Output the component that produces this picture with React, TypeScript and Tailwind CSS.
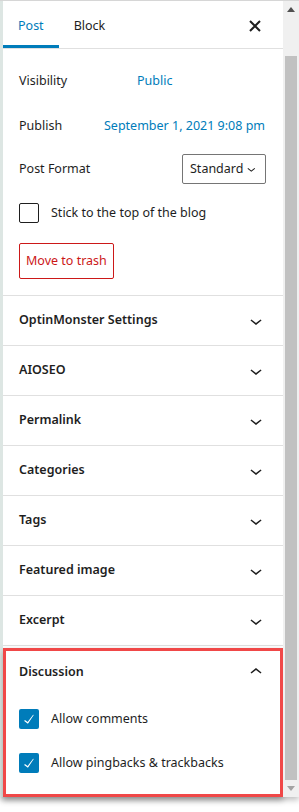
import React from "react";

const font = { fontFamily: '"Segoe UI", "Noto Sans", sans-serif' };

function ChevronDown({ size = 24 }: { size?: number }) {
  return (
    <svg width={size} height={size} viewBox="0 0 24 24" fill="#1e1e1e">
      <path d="M17.5 11.6L12 16l-5.5-4.4.9-1.2L12 14l4.6-3.6 1 1.2z" />
    </svg>
  );
}

function ChevronUp() {
  return (
    <svg width={24} height={24} viewBox="0 0 24 24" fill="#1e1e1e">
      <path d="M6.5 12.4L12 8l5.5 4.4-.9 1.2L12 10l-4.5 3.6-1-1.2z" />
    </svg>
  );
}

function CloseIcon() {
  return (
    <svg width={12} height={12} viewBox="0 0 12 12" stroke="#1e1e1e" strokeWidth={2}>
      <path d="M1 1L11 11M11 1L1 11" />
    </svg>
  );
}

function Checkbox({ checked }: { checked?: boolean }) {
  return checked ? (
    <span className="w-5 h-5 rounded-[2px] bg-[#007cba] flex items-center justify-center shrink-0">
      <svg width={24} height={24} viewBox="0 0 24 24" fill="#ffffff">
        <path d="M16.7 7.1l-6.3 8.5-3.3-2.5-.9 1.2 4.5 3.4L17.9 7z" />
      </svg>
    </span>
  ) : (
    <span className="w-5 h-5 rounded-[2px] border border-[#1e1e1e] bg-white shrink-0" />
  );
}

const panels = [
  "OptinMonster Settings",
  "AIOSEO",
  "Permalink",
  "Categories",
  "Tags",
  "Featured image",
  "Excerpt",
];

export default function App() {
  return (
    <div className="w-[299px] h-[812px] bg-white overflow-hidden text-[12.5px] text-[#1e1e1e]" style={font}>
      <div className="h-[797px] flex border-t border-[#d6d6d6] shadow-[0_3px_6px_rgba(0,0,0,0.25)]">
        <div className="w-[3px] bg-[#dde6e3] shrink-0" />
        <div className="flex-1 flex flex-col min-w-0 bg-white">
          {/* tabs */}
          <div className="h-[48px] flex items-stretch border-b border-[#e0e0e0] shrink-0">
            <div className="relative px-[15px] pt-[3px] flex items-center text-[#007cba]">
              Post
              <span className="absolute left-0 right-0 bottom-0 h-[3px] bg-[#007cba]" />
            </div>
            <div className="px-[15px] pt-[3px] flex items-center">Block</div>
            <div className="flex-1" />
            <div className="w-[48px] pt-[3px] flex items-center justify-center mr-[4px]">
              <CloseIcon />
            </div>
          </div>

          {/* post status */}
          <div className="px-4 pt-[21px] pb-[16px] border-b border-[#e0e0e0]">
            <div className="flex items-center h-[22px]">
              <span className="w-[118px]">Visibility</span>
              <span className="text-[#007cba]">Public</span>
            </div>
            <div className="flex items-center h-[22px] mt-[23px] whitespace-nowrap">
              <span className="w-[85px]">Publish</span>
              <span className="text-[#007cba]">September 1, 2021 9:08 pm</span>
            </div>
            <div className="flex items-center justify-between mt-[17px] pr-[1px]">
              <span>Post Format</span>
              <div className="h-[30px] w-[84px] border border-[#757575] rounded-[2px] flex items-center pl-[7px] pr-[5px] justify-between">
                <span>Standard</span>
                <ChevronDown size={18} />
              </div>
            </div>
            <div className="flex items-center gap-3 mt-[19px]">
              <Checkbox />
              <span>Stick to the top of the blog</span>
            </div>
            <div className="mt-[20px]">
              <span className="inline-flex items-center h-[36px] px-[6px] border border-[#cc1818] rounded-[2px] text-[#cc1818]">
                Move to trash
              </span>
            </div>
          </div>

          {panels.map((p) => (
            <div key={p} className="h-[50px] shrink-0 flex items-center justify-between pl-4 pr-[15px] border-b border-[#e0e0e0] font-semibold">
              <span>{p}</span>
              <ChevronDown />
            </div>
          ))}

          {/* discussion (highlighted) */}
          <div className="mt-[2px] h-[149px] border-[3px] border-[#f04848] shadow-[0_3px_6px_rgba(0,0,0,0.3)] flex flex-col">
            <div className="h-[42px] shrink-0 flex items-center justify-between pl-[13px] pr-[12px] font-semibold">
              <span>Discussion</span>
              <ChevronUp />
            </div>
            <div className="pl-[13px] flex flex-col gap-[24px] mt-[16px]">
              <div className="flex items-center gap-3">
                <Checkbox checked />
                <span>Allow comments</span>
              </div>
              <div className="flex items-center gap-3">
                <Checkbox checked />
                <span>Allow pingbacks &amp; trackbacks</span>
              </div>
            </div>
          </div>
        </div>

        {/* scrollbar */}
        <div className="w-[16px] bg-[#f0f0f0] flex flex-col items-center shrink-0">
          <div className="h-[17px] flex items-center justify-center">
            <svg width="8" height="5" viewBox="0 0 8 5" fill="#505050">
              <path d="M0 5L4 0L8 5z" />
            </svg>
          </div>
          <div className="w-[12px] mt-[38px] h-[724px] bg-[#c1c1c1]" />
          <div className="h-[17px] flex items-center justify-center">
            <svg width="8" height="5" viewBox="0 0 8 5" fill="#a3a3a3">
              <path d="M0 0L4 5L8 0z" />
            </svg>
          </div>
        </div>
      </div>
    </div>
  );
}
